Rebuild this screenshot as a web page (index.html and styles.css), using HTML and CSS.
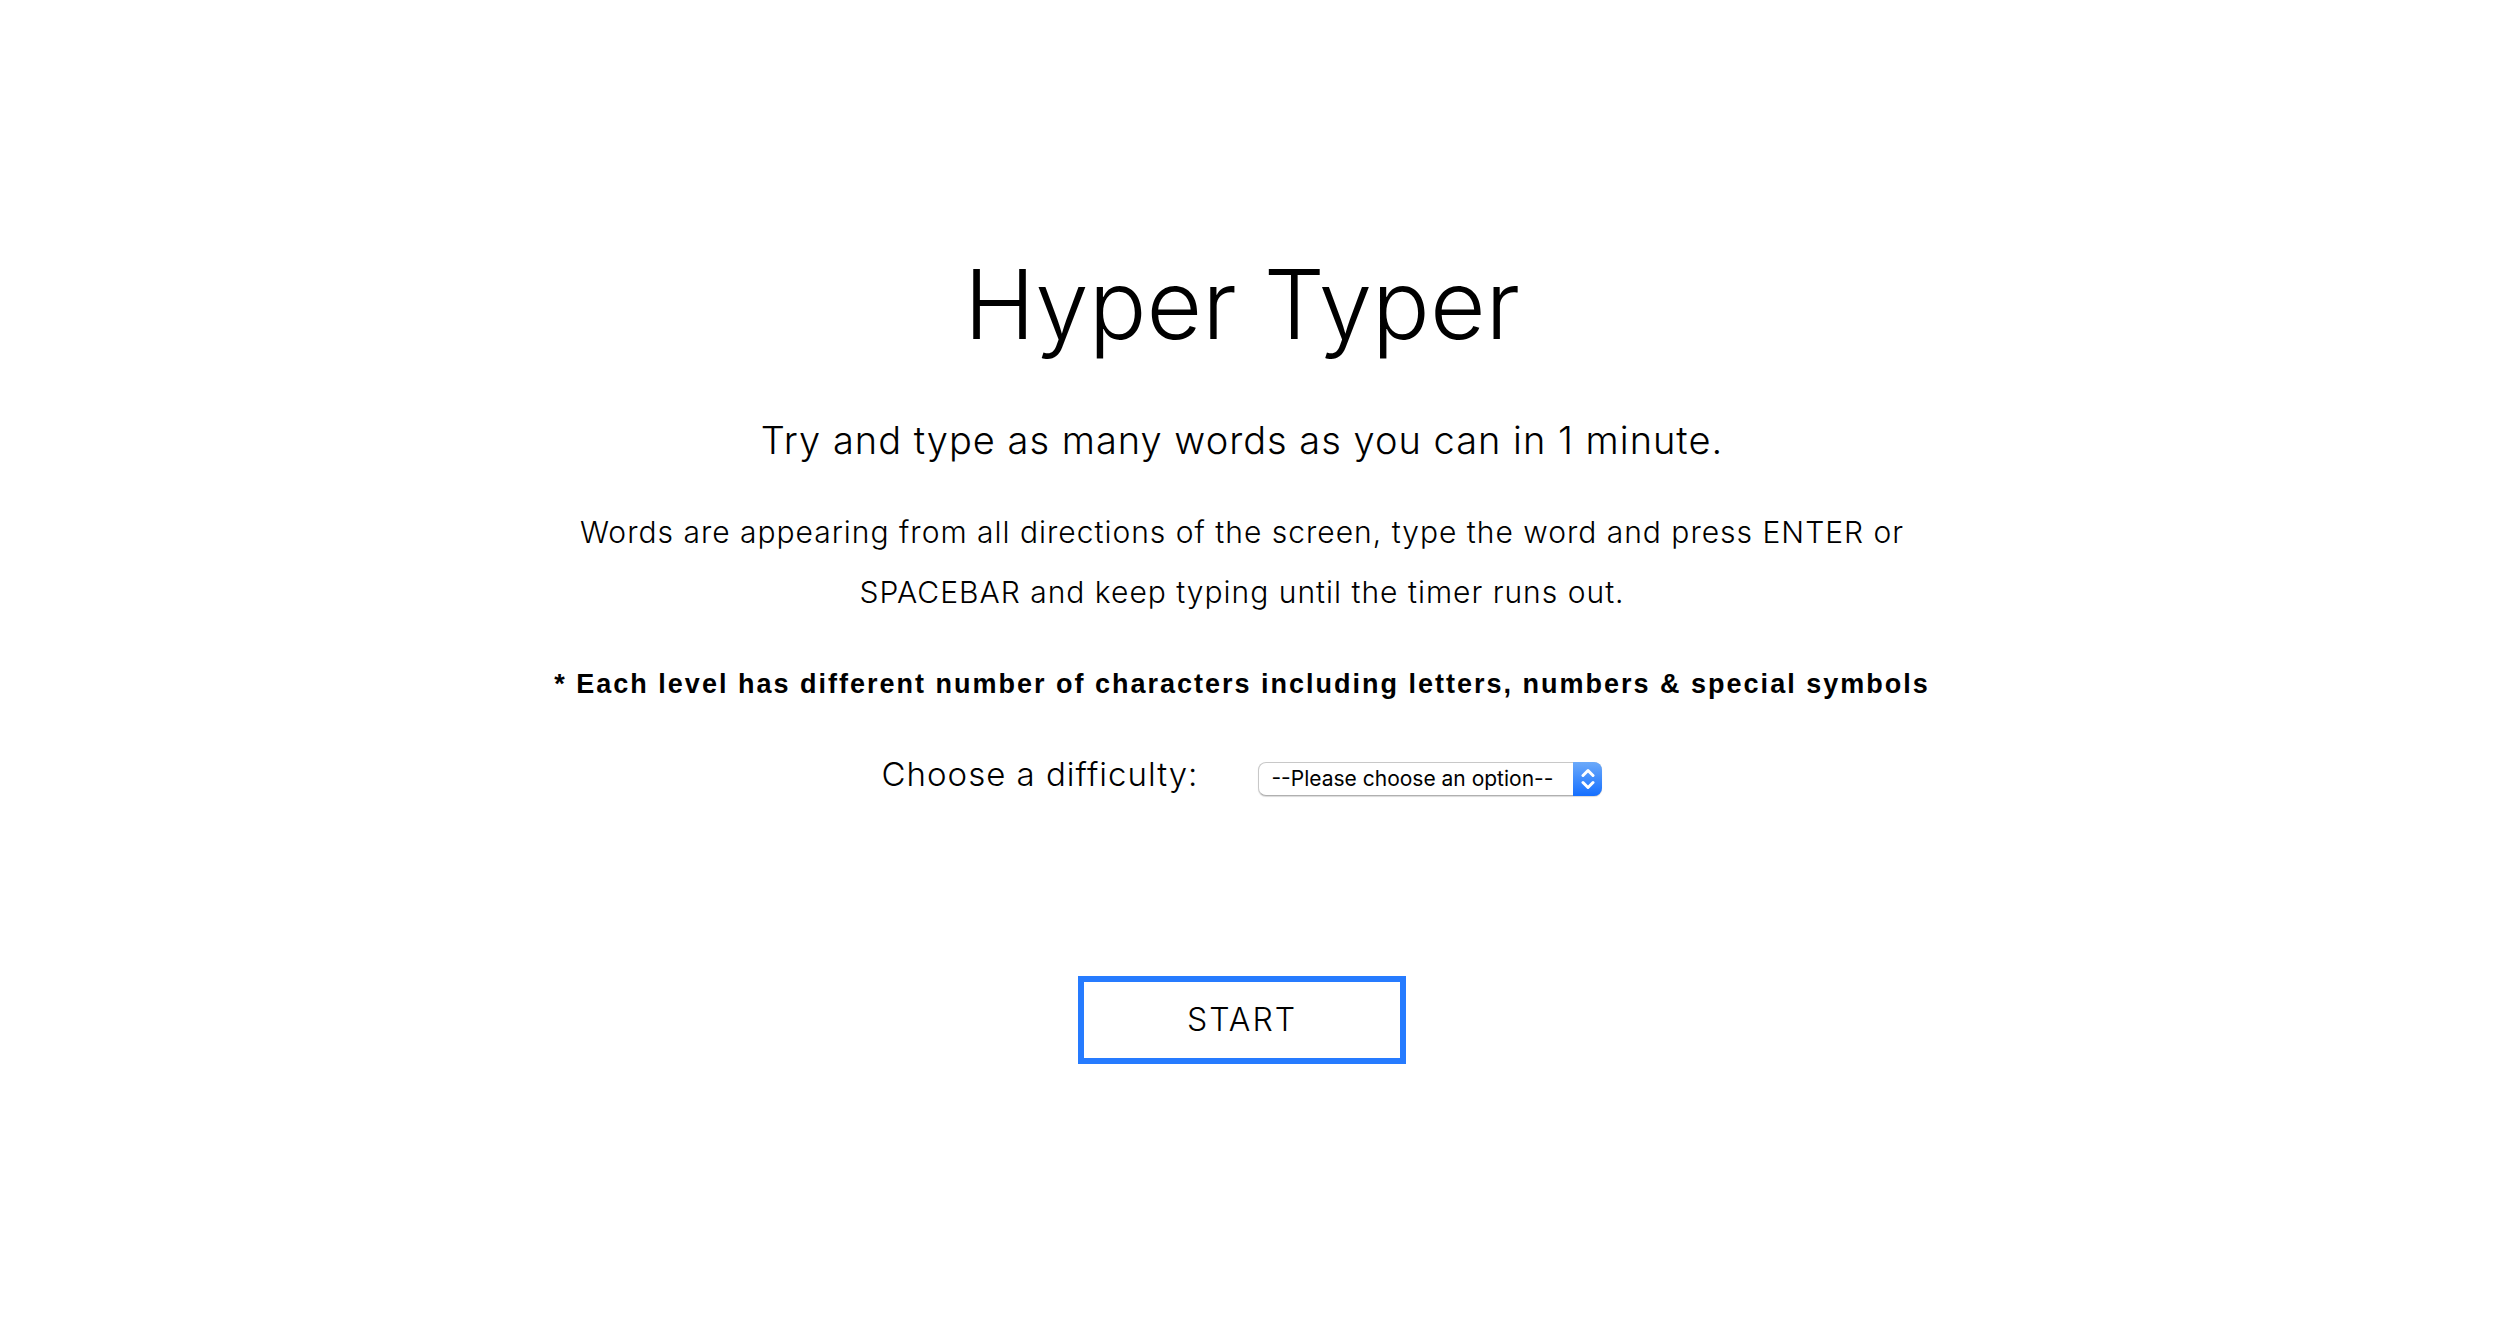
FILE: index.html
```
<!DOCTYPE html>
<html lang="en">
<head>
<meta charset="utf-8">
<title>Hyper Typer</title>
<link rel="stylesheet" href="styles.css">
</head>
<body>
<main class="intro">
  <h1 class="title">Hyper Typer</h1>
  <h2 class="subtitle">Try and type as many words as you can in 1 minute.</h2>
  <p class="rules">Words are appearing from all directions of the screen, type the word and press ENTER or SPACEBAR and keep typing until the timer runs out.</p>
  <p class="note">* Each level has different number of characters including letters, numbers &amp; special symbols</p>
  <form class="settings">
    <div class="field">
      <label class="label" for="difficulty">Choose a difficulty:</label>
      <span class="picker">
        <select class="select" id="difficulty" name="difficulty">
          <option value="">--Please choose an option--</option>
        </select>
        <span class="stepper" aria-hidden="true">
          <svg width="14" height="22" viewBox="0 0 14 22" fill="none" stroke="#fff" stroke-width="3" stroke-linecap="round" stroke-linejoin="round"><path d="M2 7.5 7 2.5l5 5M2 14.5l5 5 5-5"/></svg>
        </span>
      </span>
    </div>
    <button class="start" type="button">START</button>
  </form>
</main>
</body>
</html>
```
FILE: styles.css
```
* {
  box-sizing: border-box;
}

body {
  margin: 0;
  background: #fff;
  color: #000;
  font-family: Inter, "Liberation Sans", sans-serif;
  font-weight: 300;
}

.intro {
  display: flex;
  flex-direction: column;
  align-items: center;
  padding: 240px 24px 0 0;
  text-align: center;
}

.title {
  margin: 0;
  font-size: 96px;
  font-weight: 300;
  line-height: 128px;
}

.subtitle {
  margin: 40px 0 0;
  font-size: 38px;
  font-weight: 300;
  line-height: 64px;
  letter-spacing: 1px;
}

.rules {
  max-width: 1400px;
  margin: 30px 0 0;
  font-size: 30px;
  line-height: 60px;
  letter-spacing: 1px;
}

.note {
  margin: 32px 0 0;
  font-family: "Liberation Sans", sans-serif;
  font-size: 27px;
  font-weight: 700;
  line-height: 60px;
  letter-spacing: 2px;
}

.settings {
  display: flex;
  flex-direction: column;
  align-items: center;
}

.field {
  display: flex;
  align-items: baseline;
  gap: 60px;
  margin-top: 30px;
}

.label {
  font-size: 33px;
  line-height: 60px;
  letter-spacing: 1px;
}

.picker {
  position: relative;
  display: flex;
}

.select {
  width: 344px;
  height: 34px;
  padding: 0 32px 0 12px;
  border: 1px solid #c8c8c8;
  border-bottom-color: #b0b0b0;
  border-radius: 8px;
  background: #fff;
  box-shadow: 0 1px 1px rgba(0, 0, 0, 0.15);
  color: #000;
  font-family: Inter, "Liberation Sans", sans-serif;
  font-size: 21px;
  font-weight: 400;
  appearance: none;
}

.stepper {
  position: absolute;
  top: 0;
  right: 0;
  bottom: 0;
  display: flex;
  align-items: center;
  justify-content: center;
  width: 29px;
  border-radius: 0 8px 8px 0;
  background: linear-gradient(#6caafa, #156fff);
  pointer-events: none;
}

.start {
  width: 328px;
  height: 88px;
  margin-top: 172px;
  padding: 0 0 2px;
  border: 6px solid #267bff;
  background: #fff;
  color: #000;
  font-family: inherit;
  font-size: 32px;
  font-weight: 300;
  letter-spacing: 2px;
}
```
